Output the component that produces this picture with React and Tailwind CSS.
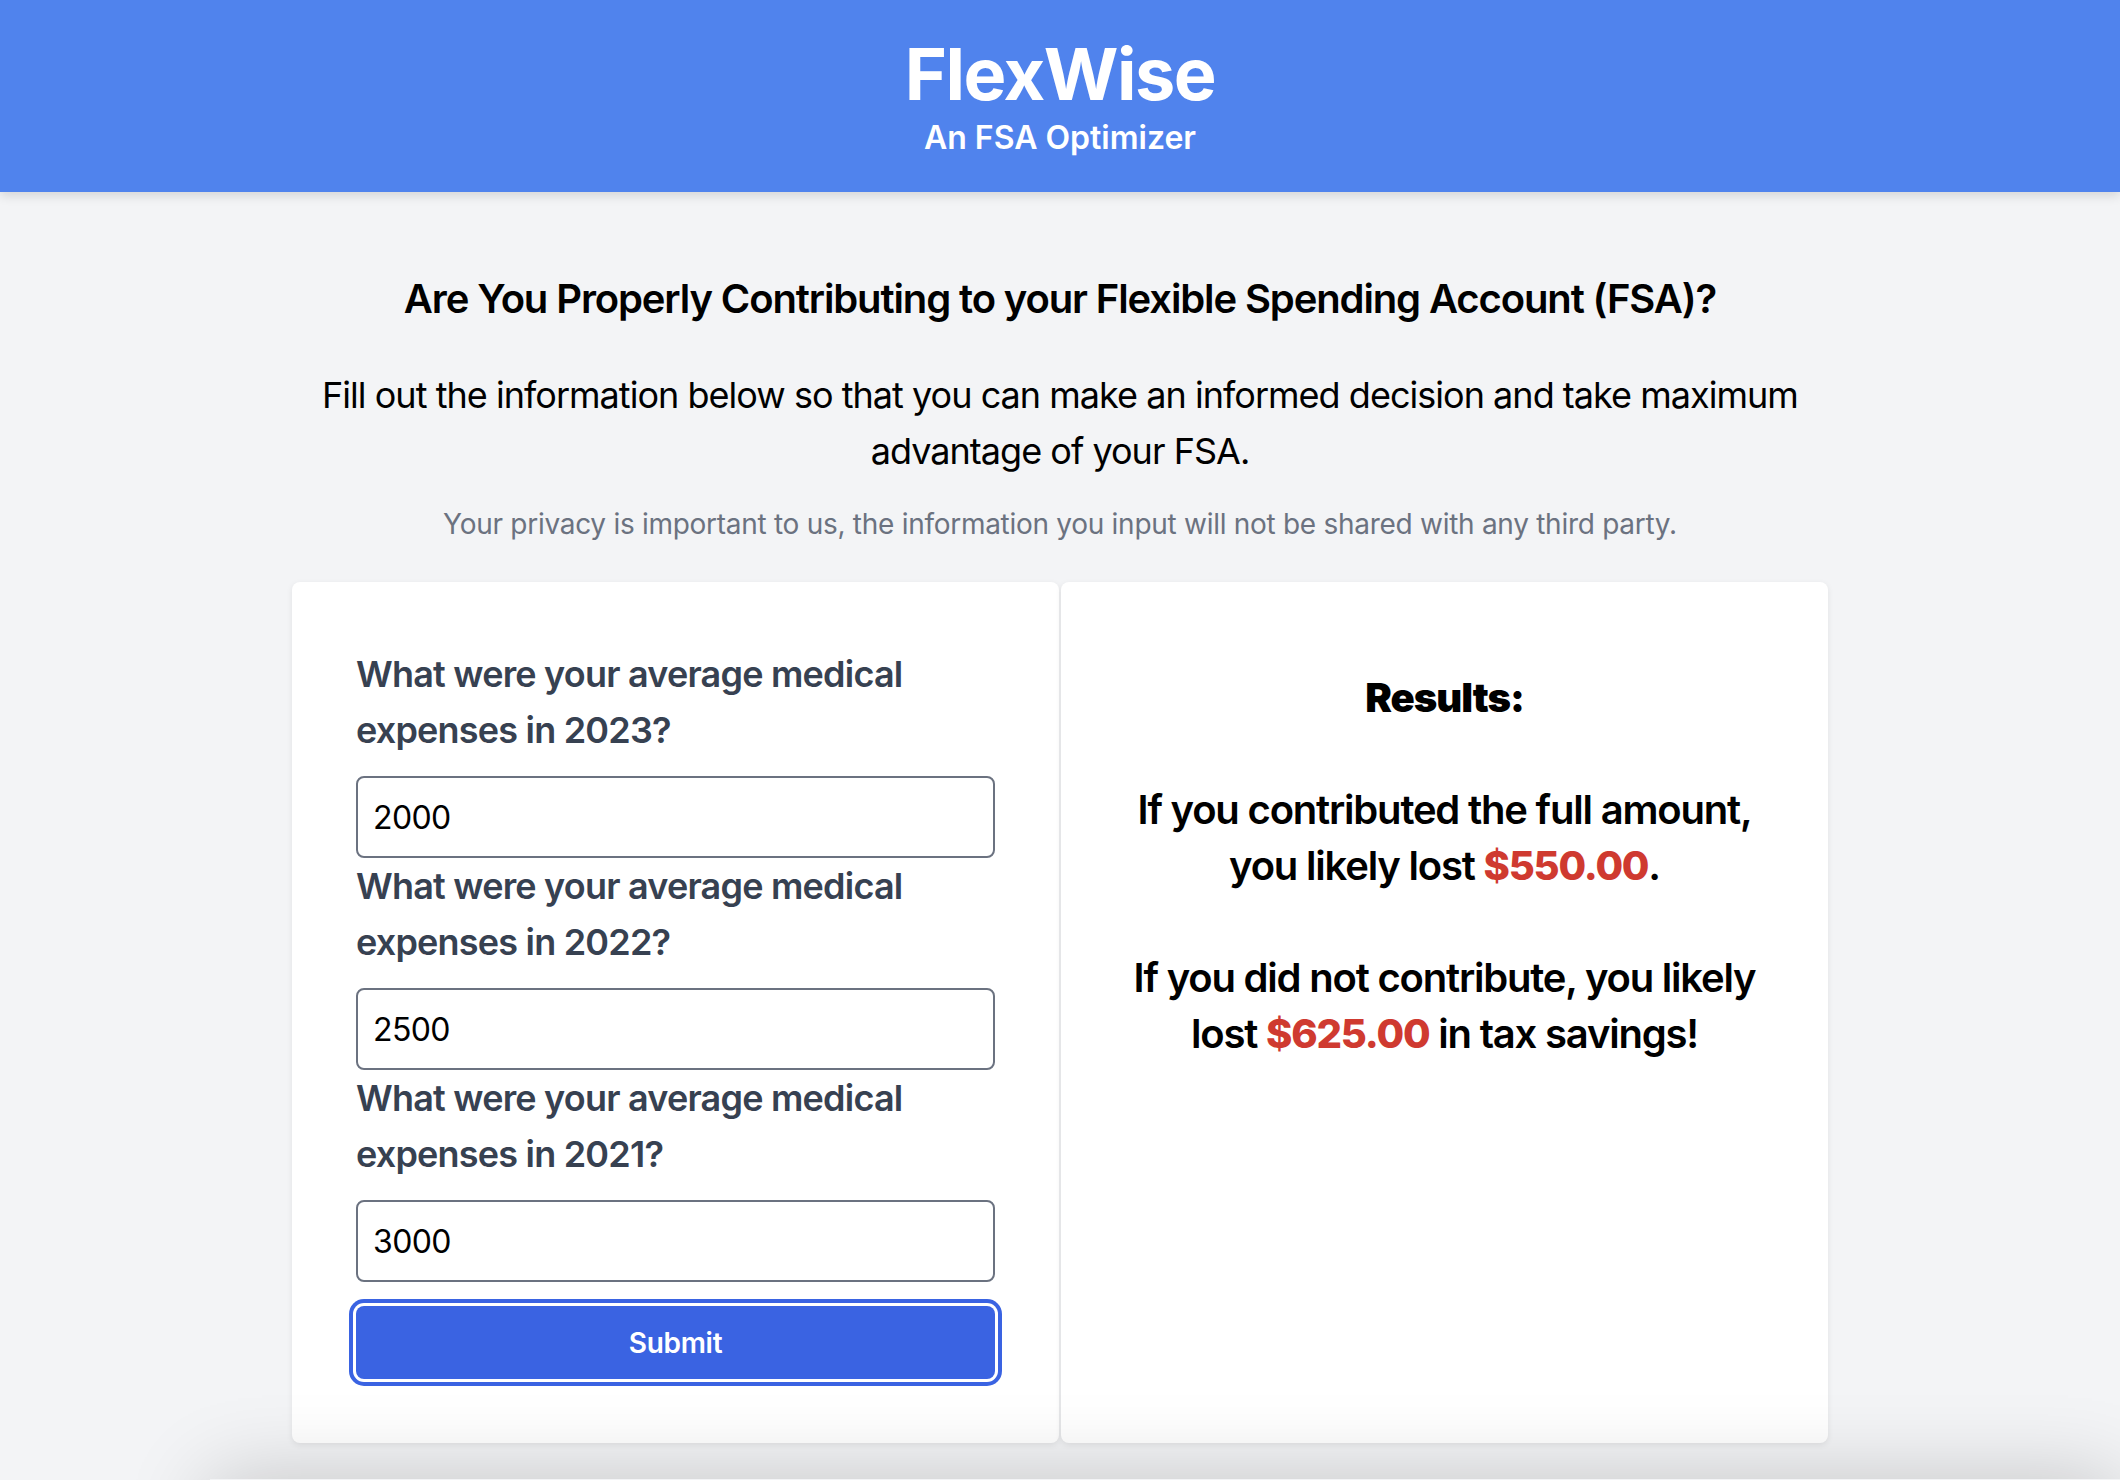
import { useState } from "react";

const years = [
  { year: 2023, value: "2000" },
  { year: 2022, value: "2500" },
  { year: 2021, value: "3000" },
];

export default function App() {
  const [values, setValues] = useState(years.map(y => y.value));

  const update = (i, v) => setValues(prev => prev.map((p, j) => (j === i ? v : p)));

  return (
    <div className="h-screen overflow-hidden bg-[#f3f4f6] font-['Inter',sans-serif]">
      <header className="relative z-10 bg-[#5083ed] pt-[34px] pb-[30px] text-center text-white shadow-[0_4px_10px_rgba(0,0,0,0.12)]">
        <h1 className="text-[72px] leading-[80px] font-bold tracking-[-1.5px]">FlexWise</h1>
        <p className="text-[32px] leading-[48px] font-semibold">An FSA Optimizer</p>
      </header>

      <main className="mx-auto w-[1536px] pt-[79px] text-center text-black">
        <h2 className="text-[40px] leading-[56px] font-semibold tracking-[-0.028em]">
          Are You Properly Contributing to your Flexible Spending Account (FSA)?
        </h2>
        <p className="mt-[40px] text-[36px] leading-[56px] tracking-[-0.027em]">
          Fill out the information below so that you can make an informed decision and take maximum advantage of your FSA.
        </p>
        <p className="mt-[25px] text-[28px] leading-[40px] tracking-[-0.01em] text-[#6b7280]">
          Your privacy is important to us, the information you input will not be shared with any third party.
        </p>

        <div className="mt-[38px] grid grid-cols-2 gap-[2px] text-left">
          <form
            className="flex flex-col rounded-lg bg-white p-16 shadow-[0_2px_6px_rgba(0,0,0,0.08)]"
            onSubmit={e => e.preventDefault()}
          >
            {years.map((y, i) => (
              <label key={y.year} className="flex flex-col">
                <span className="mb-[18px] text-[36px] leading-[56px] font-semibold tracking-[-0.022em] text-[#374151]">
                  What were your average medical expenses in {y.year}?
                </span>
                <input
                  type="text"
                  value={values[i]}
                  onChange={e => update(i, e.target.value)}
                  className="h-[82px] w-full rounded-lg border-2 border-[#6b7280] bg-white px-[15px] text-[32px] tracking-[-0.02em] text-black outline-none"
                />
              </label>
            ))}
            <button
              type="submit"
              className="mt-6 h-[73px] w-full rounded-lg bg-[#3a63e2] text-[28px] font-semibold tracking-[-0.01em] text-white ring-[4px] ring-[#3a63e2] ring-offset-[3px] ring-offset-white"
            >
              Submit
            </button>
          </form>

          <div className="rounded-lg bg-white px-16 pt-[88px] text-center shadow-[0_2px_6px_rgba(0,0,0,0.08)]">
            <h3 className="text-[40px] leading-[56px] font-black tracking-[-0.025em]">Results:</h3>
            <p className="mt-[56px] text-[40px] leading-[56px] font-semibold tracking-[-0.03em]">
              If you contributed the full amount, you likely lost{" "}
              <span className="font-extrabold text-[#cf3a30]">$550.00</span>.
            </p>
            <p className="mt-[56px] text-[40px] leading-[56px] font-semibold tracking-[-0.03em]">
              If you did not contribute, you likely lost{" "}
              <span className="font-extrabold text-[#cf3a30]">$625.00</span> in tax savings!
            </p>
          </div>
        </div>
      </main>

      <div className="relative ml-[210px] mt-[36px] h-[300px] bg-[#f3f4f6] shadow-[0_0_80px_rgba(0,0,0,0.2)]" />
    </div>
  );
}
